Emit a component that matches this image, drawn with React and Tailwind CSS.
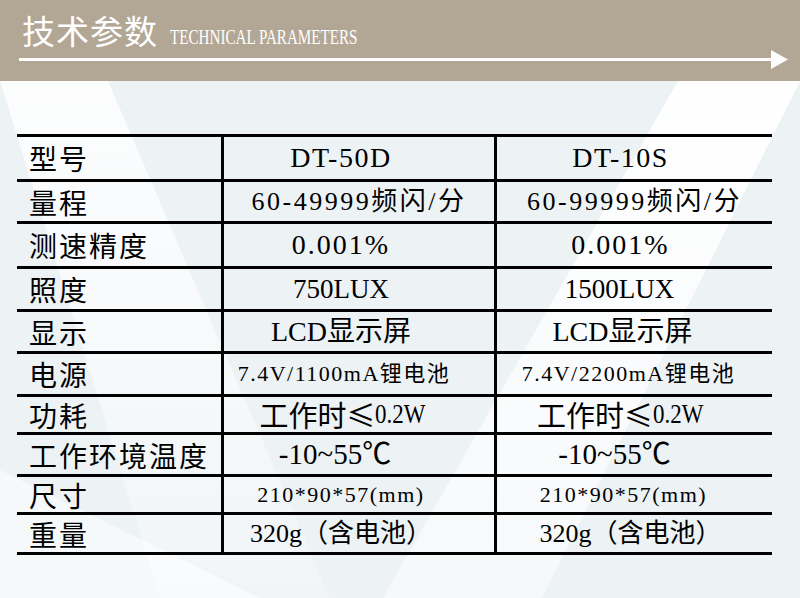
const cjk = '"Noto Sans CJK SC", sans-serif';
const serif = '"Liberation Serif", "Noto Sans CJK SC", serif';

const rows = [
  { label: "型号", h: "h-[45px]", a: "DT-50D", b: "DT-10S", size: "text-[28px] tracking-[1.5px]", pa: "pr-[36px]", pb: "pr-[28px]" },
  { label: "量程", h: "h-[42px]", a: "60-49999频闪/分", b: "60-99999频闪/分", size: "text-[26px] tracking-[2.5px]", pa: "pr-0", pb: "pr-0" },
  { label: "测速精度", h: "h-[45px]", a: "0.001%", b: "0.001%", size: "text-[28px] tracking-[2px]", pa: "pr-[36px]", pb: "pr-[28px]" },
  { label: "照度", h: "h-[43px]", a: "750LUX", b: "1500LUX", size: "text-[27px]", pa: "pr-[36px]", pb: "pr-[30px]" },
  { label: "显示", h: "h-[42px]", a: "LCD显示屏", b: "LCD显示屏", size: "text-[28px]", pa: "pr-[36px]", pb: "pr-[24px]" },
  { label: "电源", h: "h-[43px]", a: "7.4V/1100mA锂电池", b: "7.4V/2200mA锂电池", size: "text-[22px] tracking-[1.5px]", pa: "pr-[30px]", pb: "pr-[12px]" },
  { label: "功耗", h: "h-[38px]", a: "power", b: "power", size: "text-[28px]", pa: "pr-[24px]", pb: "pr-[20px]" },
  { label: "工作环境温度", h: "h-[42px]", a: "-10~55℃", b: "-10~55℃", size: "text-[29px]", pa: "pr-[48px]", pb: "pr-[40px]" },
  { label: "尺寸", h: "h-[38px]", a: "210*90*57(mm)", b: "210*90*57(mm)", size: "text-[22px] tracking-[1.5px]", pa: "pr-[36px]", pb: "pr-[22px]" },
  { label: "重量", h: "h-[40px]", a: "320g（含电池）", b: "320g（含电池）", size: "text-[26px]", pa: "pr-[36px]", pb: "pr-[8px]" },
];

function Value({ text }) {
  if (text === "power") {
    return (
      <span className="flex items-center whitespace-nowrap leading-none">
        <span className="text-[29px]" style={{ fontFamily: cjk }}>工作时≤</span>
        <span className="origin-left scale-x-[0.85] text-[27px]" style={{ fontFamily: serif }}>0.2W</span>
      </span>
    );
  }
  return <span className="whitespace-nowrap leading-none">{text}</span>;
}

function Backdrop() {
  // light diagonal bands behind the table
  return (
    <svg className="absolute inset-0" width="800" height="598" viewBox="0 0 800 598">
      <defs>
        <linearGradient id="fadeR" x1="0" y1="0" x2="0" y2="1">
          <stop offset="0" stopColor="#ffffff" stopOpacity="1" />
          <stop offset="1" stopColor="#ffffff" stopOpacity="0.5" />
        </linearGradient>
        <linearGradient id="fadeL" x1="0" y1="0" x2="0" y2="1">
          <stop offset="0" stopColor="#ffffff" stopOpacity="1" />
          <stop offset="1" stopColor="#ffffff" stopOpacity="0.3" />
        </linearGradient>
      </defs>
      <polygon points="678,81 800,81 542,598 383,598" fill="url(#fadeR)" />
      <polygon points="0,81 108,81 330,598 160,598" fill="url(#fadeL)" opacity="0.85" />
      <polygon points="0,470 260,598 0,598" fill="#ffffff" opacity="0.5" />
    </svg>
  );
}

export default function App() {
  return (
    <div className="relative h-[598px] w-[800px] overflow-hidden bg-[#edf2f5]">
      <Backdrop />
      <div className="relative">
        <header className="h-[81px] bg-[#b2a795] pl-[19px] pr-[12px] pt-[11px]">
          <div className="flex h-[39px] items-end pl-[3px]">
            <span className="text-[33px] leading-[39px] tracking-[1px] text-white" style={{ fontFamily: cjk }}>
              技术参数
            </span>
            <span
              className="mb-[2px] ml-[12px] origin-left scale-x-[0.72] text-[21px] leading-[22px] text-white"
              style={{ fontFamily: serif }}
            >
              TECHNICAL PARAMETERS
            </span>
          </div>
          <div className="flex items-center">
            <div className="h-[3px] flex-1 bg-white" />
            <svg width="17" height="19" viewBox="0 0 17 19" className="-ml-px">
              <polygon points="0,0 17,9.5 0,19" fill="#ffffff" />
            </svg>
          </div>
        </header>

        <div className="ml-[17px] mt-[53px] w-[755px] border-t-[3px] border-black text-black">
          {rows.map((r) => (
            <div key={r.label} className={`grid grid-cols-[204px_273px_278px] border-b-[3px] border-black ${r.h}`}>
              <div
                className="flex items-center whitespace-nowrap pl-[12px] text-[28px] leading-none tracking-[2px]"
                style={{ fontFamily: cjk }}
              >
                {r.label}
              </div>
              <div
                className={`flex items-center justify-center border-l-[3px] border-black ${r.size} ${r.pa}`}
                style={{ fontFamily: serif }}
              >
                <Value text={r.a} />
              </div>
              <div
                className={`flex items-center justify-center border-l-[3px] border-black ${r.size} ${r.pb}`}
                style={{ fontFamily: serif }}
              >
                <Value text={r.b} />
              </div>
            </div>
          ))}
        </div>
      </div>
    </div>
  );
}
